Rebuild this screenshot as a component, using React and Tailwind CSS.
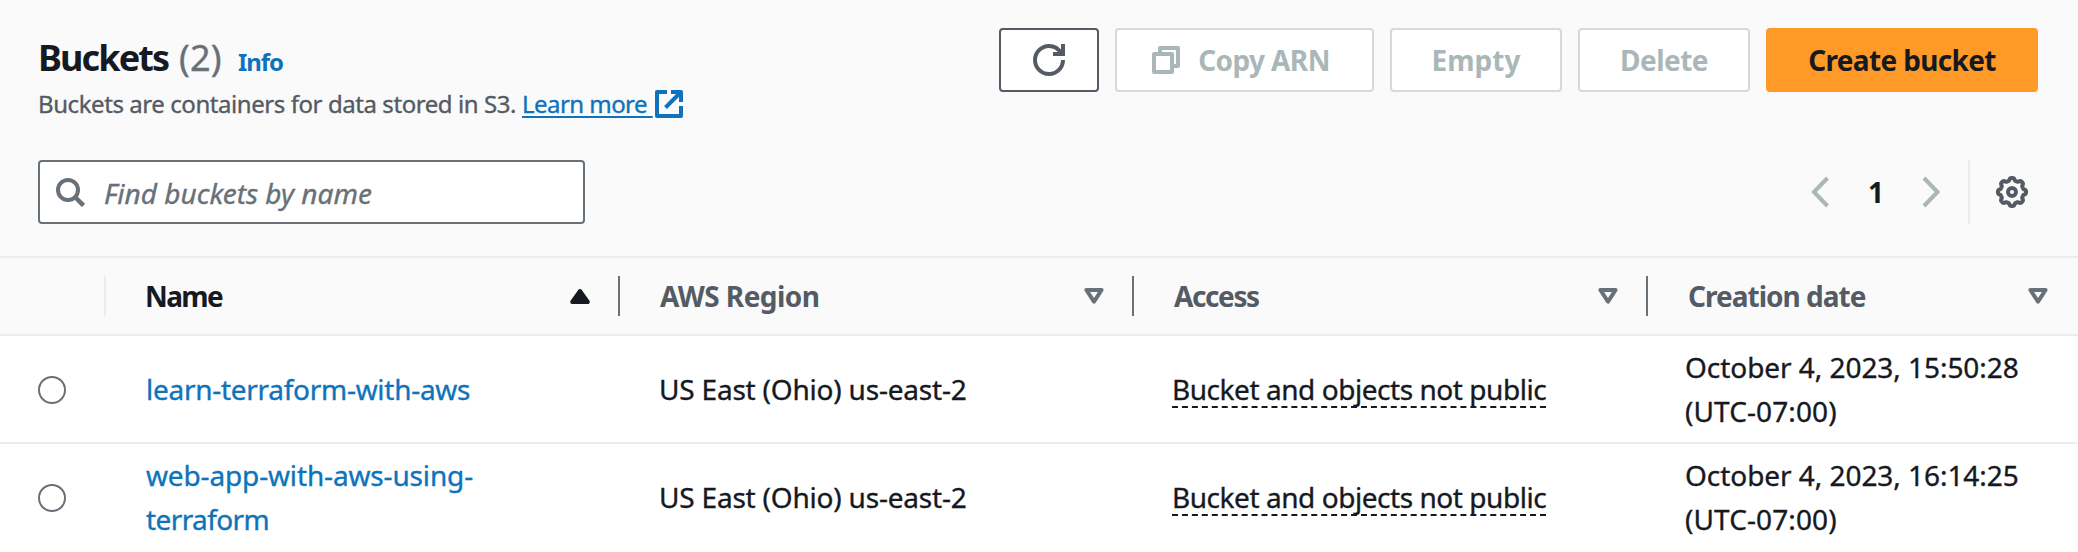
const gearPath = (() => {
  const pts = [];
  for (let i = 0; i < 144; i++) {
    const a = (i / 144) * Math.PI * 2;
    const wave = Math.tanh(2 * Math.cos(8 * a));
    const r = 12.8 + 1.3 * wave;
    pts.push(`${(16 + r * Math.cos(a)).toFixed(2)} ${(16 + r * Math.sin(a)).toFixed(2)}`);
  }
  return `M${pts.join("L")}Z`;
})();

function Icon({ w, h, className = "", children }) {
  return (
    <svg width={w} height={h} viewBox={`0 0 ${w} ${h}`} fill="none" stroke="currentColor" strokeWidth="4" className={`shrink-0 ${className}`} aria-hidden="true">
      {children}
    </svg>
  );
}

function SortIcon({ active }) {
  return (
    <Icon w={20} h={16} className={active ? "text-[#16191f]" : "text-[#687078]"}>
      {active ? (
        <path d="M10 3L17.8 14H2.2Z" fill="currentColor" strokeLinejoin="round" />
      ) : (
        <path d="M2.4 2H17.6L10 13.6Z" strokeLinejoin="round" />
      )}
    </Icon>
  );
}

function HeaderCell({ label, active, last, className }) {
  return (
    <div className={`flex h-10 items-center justify-between ${last ? "pr-[30px]" : "border-r-2 border-[#687078] pr-[28px]"} ${className}`}>
      <span className={active ? "text-[#16191f]" : "text-[#545b64]"}>{label}</span>
      <SortIcon active={active} />
    </div>
  );
}

function DisabledButton({ className, children }) {
  return (
    <button disabled className={`flex h-16 items-center justify-center rounded-[4px] border-2 border-[#d5dbdb] bg-white text-[#aab7b8] ${className}`}>
      {children}
    </button>
  );
}

const GRID = "grid grid-cols-[106px_514px_514px_514px_1fr] items-center";
const STROKE = "[-webkit-text-stroke:0.35px_currentColor]";

const buckets = [
  { name: [["learn-terraform-with-aws", "tracking-[-0.28px]"]], time: "October 4, 2023, 15:50:28" },
  { name: [["web-app-with-aws-using-", "tracking-[-0.15px]"], ["terraform", "tracking-[-0.6px]"]], time: "October 4, 2023, 16:14:25" },
];

export default function App() {
  return (
    <div className="h-[552px] w-[2078px] overflow-hidden bg-white font-['Noto_Sans',sans-serif] text-[28px] leading-[44px] text-[#16191f]">
      <header className="h-[258px] border-b-2 border-[#eaeded] bg-[#fafafa] pt-7 pr-10 pl-[38px]">
        <div className="flex h-[132px] items-start justify-between">
          <div>
            <h1 className="flex h-[58px] items-baseline pt-px text-[36px] leading-[58px] whitespace-nowrap">
              <span className="w-[141px] font-bold tracking-[-1.9px]">Buckets</span>
              <span className={`w-[59px] tracking-[0.2px] text-[#687078] ${STROKE}`}>(2)</span>
              <a className="text-[24px] font-bold tracking-[-1.1px] text-[#0f73bb]">Info</a>
            </h1>
            <p className={`flex h-9 items-center text-[24px] leading-9 whitespace-nowrap text-[#545b64] ${STROKE}`}>
              <span className="w-[484px] tracking-[-0.43px]">Buckets are containers for data stored in S3.</span>
              <a className="flex items-center text-[#0f73bb]">
                <span className="w-[133px] tracking-[-0.55px] underline decoration-2 underline-offset-[3px]">Learn more&nbsp;</span>
                <Icon w={28} h={28}>
                  <path d="M12 2H2V26H26V16M16 2H26V12M10.5 17.5L26 2" strokeLinejoin="round" />
                </Icon>
              </a>
            </p>
          </div>
          <div className="flex font-bold whitespace-nowrap">
            <button className="mr-4 flex h-16 w-[100px] items-center justify-center rounded-[4px] border-2 border-[#545b64] bg-white text-[#545b64]">
              <Icon w={32} h={32}>
                <path d="M30 16A14 14 0 1 1 16 2C22 2 26 5 28.5 10M30 0V10H20" />
              </Icon>
            </button>
            <DisabledButton className="mr-4 w-[259px] gap-[18px] pr-[7px] tracking-[-0.6px]">
              <Icon w={28} h={28}>
                <path d="M2 8H20V26H2ZM8 8V2H26V20H20" strokeLinejoin="round" />
              </Icon>
              Copy ARN
            </DisabledButton>
            <DisabledButton className="mr-4 w-[172px]">Empty</DisabledButton>
            <DisabledButton className="mr-4 w-[172px] tracking-[-0.5px]">Delete</DisabledButton>
            <button className="flex h-16 w-[272px] items-center justify-center rounded-[4px] bg-[#ff9a28] tracking-[-0.65px]">Create bucket</button>
          </div>
        </div>
        <div className="flex items-center justify-between">
          <div className="flex h-16 w-[547px] items-center rounded-[4px] border-2 border-[#687078] bg-white pl-4 text-[#687078]">
            <Icon w={29} h={29}>
              <circle cx="12" cy="12" r="10" />
              <path d="M18.5 18.5L27.5 27.5" strokeWidth="4.5" />
            </Icon>
            <span className={`ml-[19px] pt-0.5 italic ${STROKE}`}>Find buckets by name</span>
          </div>
          <div className="flex h-16 items-center text-[#aab7b8]">
            <Icon w={19} h={32}>
              <path d="M17.5 2L4 16L17.5 30" />
            </Icon>
            <span className="ml-[39px] w-[54px] font-bold text-[#16191f]">1</span>
            <Icon w={19} h={32}>
              <path d="M2 2L15.5 16L2 30" />
            </Icon>
            <span className="ml-[27px] h-16 w-0.5 bg-[#eaeded]" />
            <Icon w={32} h={32} className="mr-[10px] ml-[26px] text-[#545b64]">
              <path d={gearPath} />
              <circle cx="16" cy="16" r="4" />
            </Icon>
          </div>
        </div>
      </header>

      <div className={`${GRID} h-[78px] border-b-2 border-[#eaeded] bg-[#fafafa] font-bold whitespace-nowrap`}>
        <div className="h-10 border-r-2 border-[#eaeded]" />
        <HeaderCell label="Name" active className="pl-[39px] tracking-[-1.6px]" />
        <HeaderCell label="AWS Region" className="pl-10 tracking-[-0.55px]" />
        <HeaderCell label="Access" className="pl-10 tracking-[-1.4px]" />
        <HeaderCell label="Creation date" last className="pl-10 tracking-[-0.98px]" />
      </div>

      {buckets.map((b, i) => (
        <div key={b.time} className={`${GRID} ${STROKE} ${i === 0 ? "mr-px h-[108px] border-b-2 border-[#eaeded]" : "h-[106px]"} whitespace-nowrap`}>
          <div className="pt-0.5 pl-[38px]">
            <div className="size-7 rounded-full border-2 border-[#687078] bg-white" />
          </div>
          <div className="pl-10 text-[#0f73bb]">
            {b.name.map(([line, tracking]) => (
              <div key={line} className={tracking}>{line}</div>
            ))}
          </div>
          <div className="pl-[39px] tracking-[-0.2px]">US East (Ohio) us-east-2</div>
          <div className="flex pt-0.5 pl-[38px]">
            <span className="border-b-2 border-dashed border-[#16191f] leading-[34px] tracking-[-0.45px]">Bucket and objects not public</span>
          </div>
          <div className="pl-[37px] tracking-[-0.05px]">
            <div>{b.time}</div>
            <div className="tracking-[0.1px]">(UTC-07:00)</div>
          </div>
        </div>
      ))}
    </div>
  );
}
